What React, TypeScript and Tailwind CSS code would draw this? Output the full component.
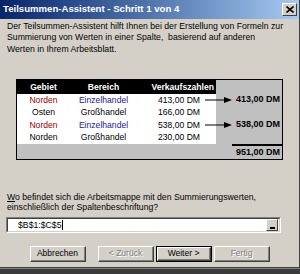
import React from 'react';

const font = { fontFamily: '"Liberation Sans", Arial, sans-serif' };

const rows = [
  { gebiet: 'Norden', bereich: 'Einzelhandel', wert: '413,00 DM', marked: true },
  { gebiet: 'Osten', bereich: 'Großhandel', wert: '166,00 DM', marked: false },
  { gebiet: 'Norden', bereich: 'Einzelhandel', wert: '538,00 DM', marked: true },
  { gebiet: 'Norden', bereich: 'Großhandel', wert: '230,00 DM', marked: false },
];

const Arrow = () => (
  <svg width="28" height="7" viewBox="0 0 28 7" className="absolute left-[188px] top-1/2 -translate-y-1/2">
    <line x1="0" y1="3.5" x2="20" y2="3.5" stroke="#000" strokeWidth="1.2" />
    <polygon points="19,0.5 27,3.5 19,6.5" fill="#000" />
  </svg>
);

const Button = ({ label, disabled, isDefault }: { label: string; disabled?: boolean; isDefault?: boolean }) => (
  <div className={`h-[16px] w-[56px] ${isDefault ? 'border border-black' : ''}`}>
    <div className="h-full w-full border-t border-l border-t-white border-l-white border-r border-b border-r-[#404040] border-b-[#404040] bg-[#d4d0c8]">
      <div className="flex h-full w-full items-center justify-center border-r border-b border-r-[#808080] border-b-[#808080] text-[8.5px] leading-none">
        {disabled ? (
          <span className="text-[#808080] [text-shadow:1px_1px_0_#fff]">{label}</span>
        ) : (
          <span className="text-black">{label}</span>
        )}
      </div>
    </div>
  </div>
);

export default function App() {
  return (
    <div className="h-[274px] w-[300px] overflow-hidden bg-[#d4d0c8]" style={font}>
      <div className="flex h-[268px] w-[300px] flex-col border-r border-b border-r-[#404040] border-b-[#404040]">
        {/* title bar */}
        <div className="flex h-[19px] items-center justify-between bg-gradient-to-r from-[#0a246a] to-[#a6caf0] pl-[3px] pr-[2px]">
          <span className="text-[9.6px] font-bold text-white">Teilsummen-Assistent - Schritt 1 von 4</span>
          <div className="flex h-[13px] w-[15px] items-center justify-center border-t border-l border-t-white border-l-white border-r border-b border-r-[#404040] border-b-[#404040] bg-[#d4d0c8]">
            <svg width="8" height="7" viewBox="0 0 8 7">
              <path d="M0.5 0.5 L7.5 6.5 M7.5 0.5 L0.5 6.5" stroke="#000" strokeWidth="1.6" />
            </svg>
          </div>
        </div>

        <p className="mt-[2px] whitespace-nowrap px-[7px] text-[8.7px] leading-[11.3px] text-black">
          Der Teilsummen-Assistent hilft Ihnen bei der Erstellung von Formeln zur
          <br />
          Summierung von Werten in einer Spalte,&nbsp; basierend auf anderen
          <br />
          Werten in Ihrem Arbeitsblatt.
        </p>

        {/* example table */}
        <div className="ml-[16px] mt-[24px] h-[81px] w-[267px] border border-black bg-[#c0c0c0] text-[8.6px] leading-none">
          <div className="flex h-[14px] items-center">
            <div className="flex h-full w-[199px] items-center bg-black font-bold text-white">
              <span className="w-[53px] text-center">Gebiet</span>
              <span className="w-[67px] text-center">Bereich</span>
              <span className="w-[79px] pr-[2px] text-right">Verkaufszahlen</span>
            </div>
          </div>
          {rows.map((r, i) => (
            <div key={i} className={`relative flex items-center ${i % 2 === 0 ? 'h-[12px]' : 'h-[13px]'}`}>
              <div className="flex h-full w-[199px] items-center bg-white">
                <span className={`w-[53px] text-center ${r.marked ? 'text-[#a00000]' : 'text-black'}`}>{r.gebiet}</span>
                <span className={`w-[67px] text-center ${r.marked ? 'text-[#1c1c8c]' : 'text-black'}`}>{r.bereich}</span>
                <span className="w-[79px] pr-[16px] text-right text-black">{r.wert}</span>
              </div>
              {r.marked && (
                <>
                  <Arrow />
                  <span className="flex-1 pr-[2px] text-right text-[9px] font-bold text-black">{r.wert}</span>
                </>
              )}
            </div>
          ))}
          <div className="flex h-[15px] justify-end">
            <div className="flex w-[50px] items-center justify-end border-t-2 border-black pr-[2px] text-[9px] font-bold text-black">
              951,00 DM
            </div>
          </div>
        </div>

        <p className="mt-[32px] px-[7px] text-[8.7px] leading-[10.5px] text-black">
          <span className="underline">W</span>o befindet sich die Arbeitsmappe mit den Summierungswerten,
          <br />
          einschließlich der Spaltenbeschriftung?
        </p>

        {/* reference input */}
        <div className="ml-[6px] mt-[4px] h-[16px] w-[275px] border-t border-l border-t-[#808080] border-l-[#808080] border-r border-b border-r-white border-b-white">
          <div className="flex h-full w-full items-center border-t border-l border-t-[#404040] border-l-[#404040] border-r border-b border-r-[#d4d0c8] border-b-[#d4d0c8] bg-white pl-[10px] pr-[1px]">
            <span className="text-[8.7px] leading-none text-black">$B$1:$C$5</span>
            <span className="ml-[1px] h-[10px] w-px bg-black" />
            <div className="ml-auto flex h-[12px] w-[12px] items-end justify-center border-t border-l border-t-white border-l-white border-r border-b border-r-[#404040] border-b-[#404040] bg-[#d4d0c8] pb-[1px]">
              <span className="h-[2px] w-[5px] bg-black" />
            </div>
          </div>
        </div>

        {/* buttons */}
        <div className="ml-[30px] mt-[13px] flex">
          <Button label="Abbrechen" />
          <div className="ml-[12px]">
            <Button label="< Zurück" disabled />
          </div>
          <div className="ml-[2px]">
            <Button label="Weiter >" isDefault />
          </div>
          <div className="ml-[2px]">
            <Button label="Fertig" disabled />
          </div>
        </div>
      </div>
      <div className="h-px w-full bg-[#808080]" />
      <div className="h-[5px] w-full bg-[#3a3a3a]" />
    </div>
  );
}
